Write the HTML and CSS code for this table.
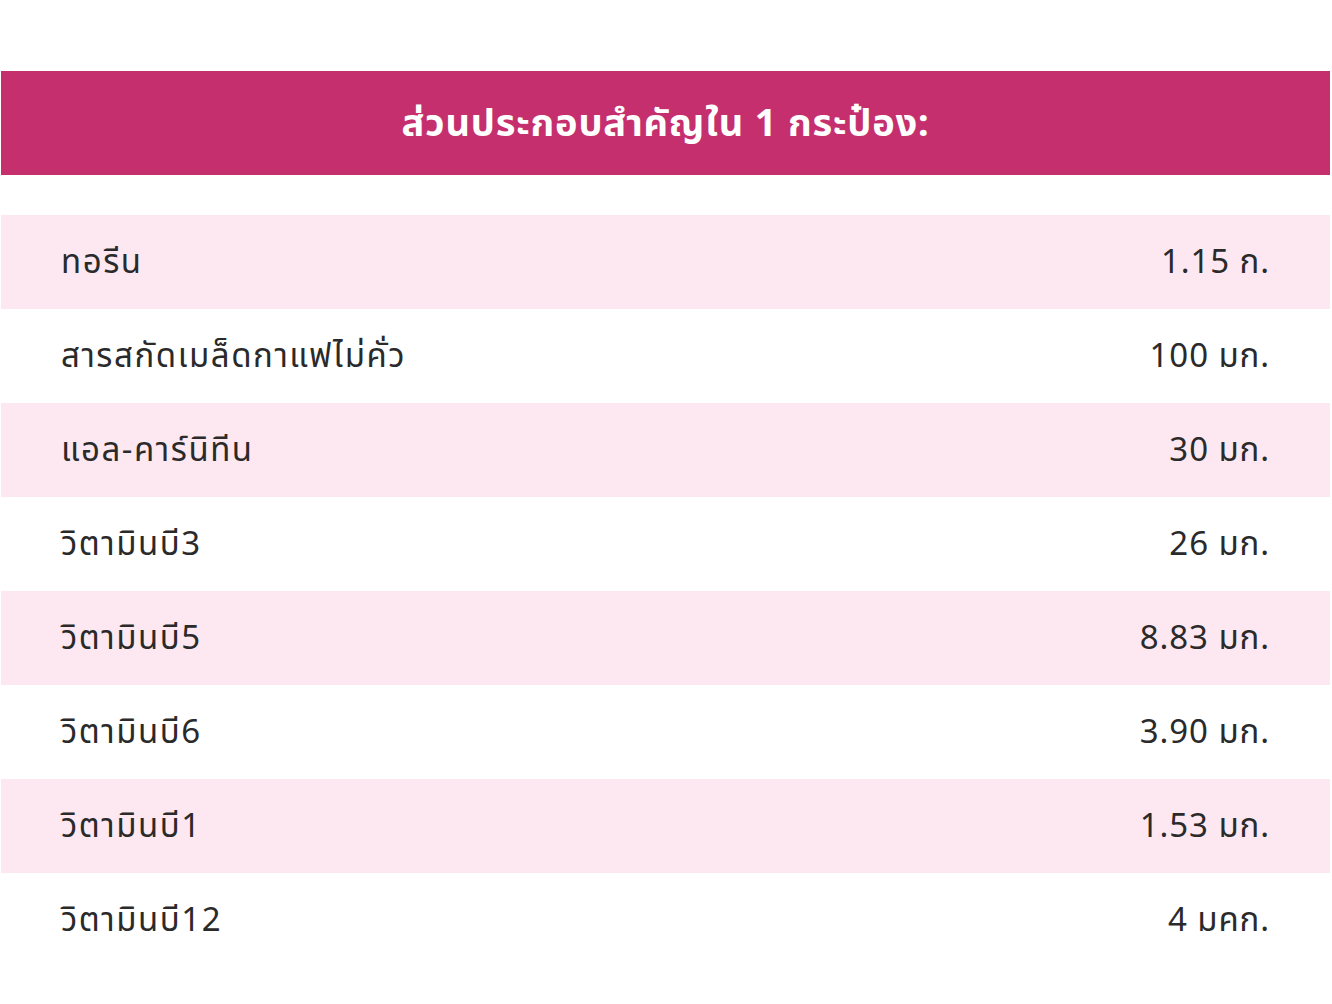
FILE: index.html
```html
<!DOCTYPE html>
<html lang="th">
<head>
<meta charset="utf-8">
<title>ส่วนประกอบสำคัญ</title>
<link rel="stylesheet" href="styles.css">
</head>
<body>
<div class="wrap">
  <h2 class="title">ส่วนประกอบสำคัญใน 1 กระป๋อง:</h2>
  <div class="list">
    <div class="row alt"><span class="name">ทอรีน</span><span class="amt">1.15 ก.</span></div>
    <div class="row"><span class="name">สารสกัดเมล็ดกาแฟไม่คั่ว</span><span class="amt">100 มก.</span></div>
    <div class="row alt"><span class="name">แอล-คาร์นิทีน</span><span class="amt">30 มก.</span></div>
    <div class="row"><span class="name">วิตามินบี3</span><span class="amt">26 มก.</span></div>
    <div class="row alt"><span class="name">วิตามินบี5</span><span class="amt">8.83 มก.</span></div>
    <div class="row"><span class="name">วิตามินบี6</span><span class="amt">3.90 มก.</span></div>
    <div class="row alt"><span class="name">วิตามินบี1</span><span class="amt">1.53 มก.</span></div>
    <div class="row"><span class="name">วิตามินบี12</span><span class="amt">4 มคก.</span></div>
  </div>
</div>
</body>
</html>
```

FILE: styles.css
```css
html, body {
  margin: 0;
  padding: 0;
  background: #ffffff;
}
body {
  font-family: "Noto Sans", "Noto Sans Thai", "Open Sans", sans-serif;
  color: #2b2a2b;
}
.wrap {
  padding: 71px 2px 0 1px;
}
.title {
  margin: 0;
  height: 104px;
  background: #c52f6e;
  color: #ffffff;
  font-size: 38px;
  font-weight: 700;
  letter-spacing: 0.8px;
  display: flex;
  align-items: center;
  justify-content: center;
  padding-top: 2px;
  box-sizing: border-box;
}
.list {
  margin-top: 40px;
}
.row {
  height: 94px;
  display: flex;
  align-items: center;
  justify-content: space-between;
  padding: 2px 61px 0 60px;
  box-sizing: border-box;
  font-size: 33px;
  font-weight: 400;
}
.name {
  letter-spacing: 1.55px;
}
.amt {
  letter-spacing: 0.9px;
  margin-right: -1px;
}
.row.alt {
  background: #fde8f1;
}
```
